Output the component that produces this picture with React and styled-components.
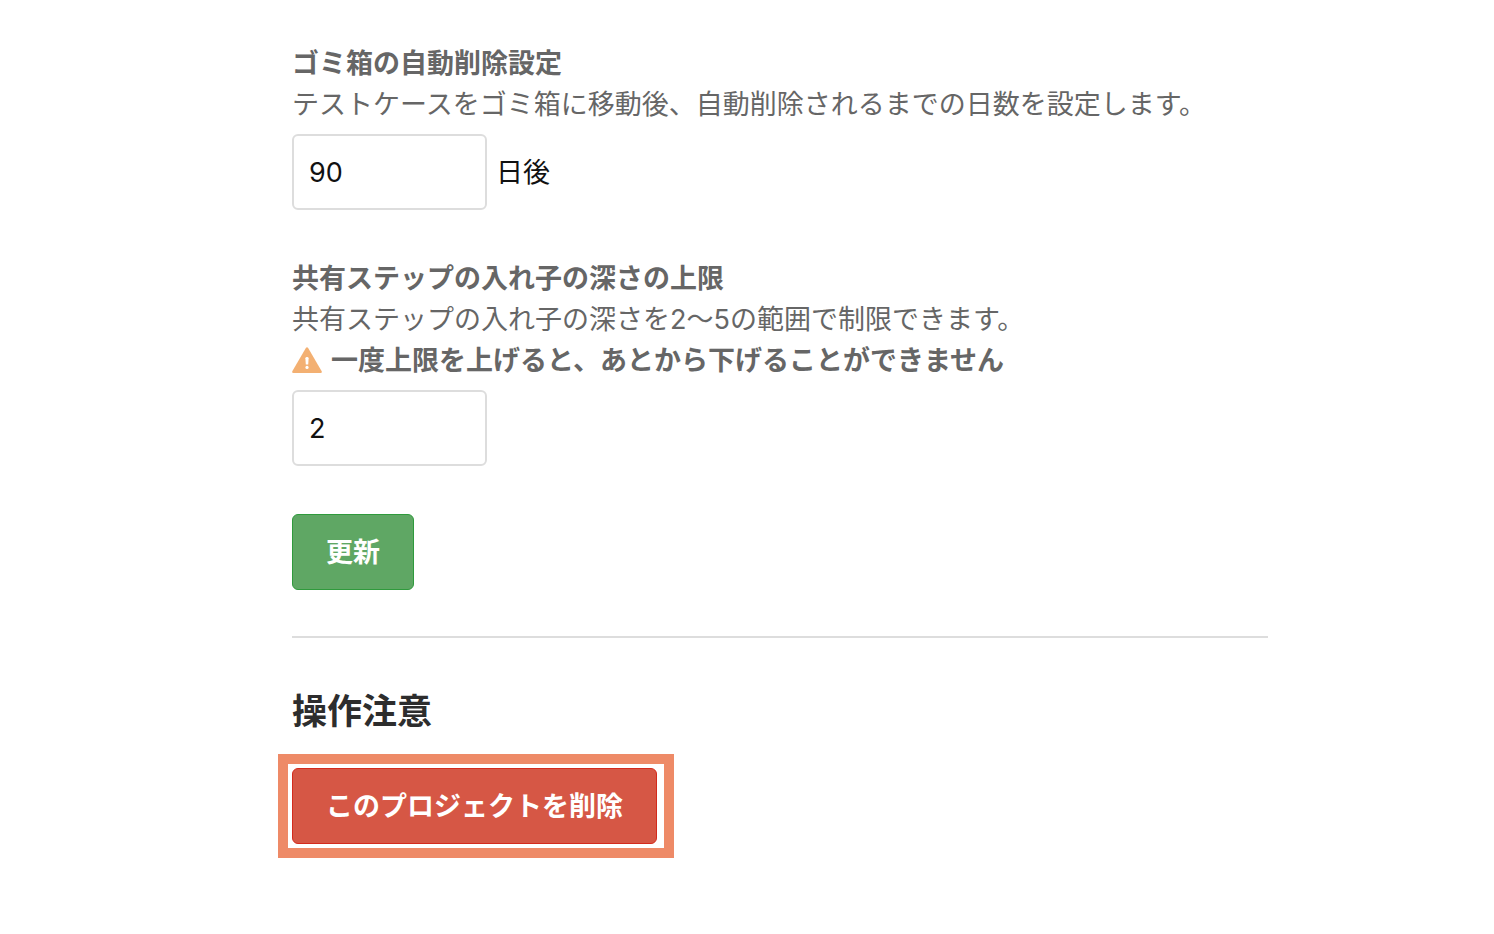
import React, { useState } from "react";
import styled, { createGlobalStyle } from "styled-components";

const GlobalStyle = createGlobalStyle`
  * {
    box-sizing: border-box;
  }

  body {
    margin: 0;
    background-color: #ffffff;
    color: #111111;
    font-family: Inter, "Noto Sans CJK JP", sans-serif;
    font-size: 27px;
    line-height: 41px;
  }
`;

const Page = styled.main`
  max-width: 1042px;
  margin: 0 auto;
  padding: 43px 0 43px 66px;
`;

const Form = styled.form`
  display: flex;
  flex-direction: column;
  align-items: flex-start;
  gap: 48px;
`;

const Label = styled.label`
  display: block;
  color: #666666;
  font-weight: bold;
`;

const Description = styled.p`
  margin: 0;
  color: #666666;
`;

const Warning = styled.p`
  display: flex;
  align-items: center;
  gap: 9px;
  margin: 0;
  color: #666666;
  font-weight: bold;
`;

const InputRow = styled.div`
  display: flex;
  align-items: center;
  gap: 9px;
  margin-top: 9px;
`;

const Input = styled.input`
  width: 195px;
  height: 76px;
  padding: 0 15px;
  border: 2px solid #dddddd;
  border-radius: 6px;
  background-color: #ffffff;
  color: #111111;
  font: inherit;
`;

const Button = styled.button`
  height: 76px;
  padding: 0 33px;
  border: 1px solid ${({ $border }) => $border};
  border-radius: 6px;
  background-color: ${({ $color }) => $color};
  color: #ffffff;
  font: inherit;
  font-weight: bold;
  cursor: pointer;
`;

const Divider = styled.hr`
  height: 2px;
  margin: 46px 0 47px;
  border: none;
  background-color: #dddddd;
`;

const Heading = styled.h2`
  margin: 0;
  color: #2d2d2d;
  font-size: 35px;
  line-height: 52px;
`;

const Highlight = styled.div`
  width: fit-content;
  margin: 17px 0 0 -14px;
  padding: 4px 7px 4px 4px;
  border: 10px solid #ee8a67;
`;

function WarningIcon() {
  return (
    <svg width="30" height="27" viewBox="0 0 30 27" aria-hidden="true">
      <path
        d="M14 .8Q15 -.4 16 .8L29.7 24.2Q30.3 26 28.6 26H1.4Q-.3 26 .3 24.2Z"
        fill="#f3b072"
      />
      <path
        d="M13.4 11.2Q13.4 10 15 10T16.6 11.2L16.2 17.4H13.8Z"
        fill="#ffffff"
      />
      <circle cx="15" cy="20.4" r="1.6" fill="#ffffff" />
    </svg>
  );
}

function App() {
  const [days, setDays] = useState("90");
  const [depth, setDepth] = useState("2");

  return (
    <>
      <GlobalStyle />
      <Page>
        <Form onSubmit={(e) => e.preventDefault()}>
          <div>
            <Label htmlFor="days">ゴミ箱の自動削除設定</Label>
            <Description>
              テストケースをゴミ箱に移動後、自動削除されるまでの日数を設定します。
            </Description>
            <InputRow>
              <Input
                id="days"
                value={days}
                onChange={(e) => setDays(e.target.value)}
              />
              <span>日後</span>
            </InputRow>
          </div>
          <div>
            <Label htmlFor="depth">共有ステップの入れ子の深さの上限</Label>
            <Description>
              共有ステップの入れ子の深さを2〜5の範囲で制限できます。
            </Description>
            <Warning>
              <WarningIcon />
              一度上限を上げると、あとから下げることができません
            </Warning>
            <InputRow>
              <Input
                id="depth"
                value={depth}
                onChange={(e) => setDepth(e.target.value)}
              />
            </InputRow>
          </div>
          <Button type="submit" $color="#5fa764" $border="#2f9a3c">
            更新
          </Button>
        </Form>
        <Divider />
        <Heading>操作注意</Heading>
        <Highlight>
          <Button type="button" $color="#d65745" $border="#d42a1c">
            このプロジェクトを削除
          </Button>
        </Highlight>
      </Page>
    </>
  );
}

export default App;
